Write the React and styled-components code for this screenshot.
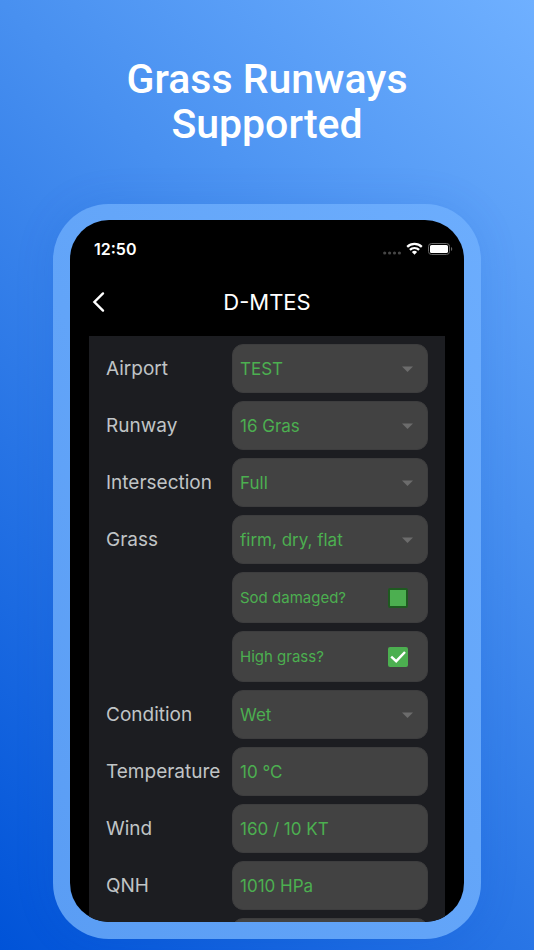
import React from 'react';
import styled, { createGlobalStyle } from 'styled-components';

const GlobalStyle = createGlobalStyle`
  *, *::before, *::after { box-sizing: border-box; }
  body { margin: 0; font-family: Inter, "Noto Sans", sans-serif; }
`;

const Page = styled.main`
  height: 100vh;
  display: flex;
  flex-direction: column;
  align-items: center;
  padding: 57px 53px 11px;
  overflow: hidden;
  background: linear-gradient(45deg, #0053d8 0%, #4890f0 64%, #6fb0ff 100%);
`;

const Headline = styled.h1`
  max-width: 300px;
  margin: 0 0 57px;
  color: #fff;
  font: 500 41px/45px Roboto, sans-serif;
  text-align: center;
`;

const Phone = styled.section`
  flex: 1;
  min-height: 0;
  width: 100%;
  padding: 16px 17px 17px;
  border-radius: 56px;
  background: linear-gradient(to top right, #5a9df4, #6cadfd);
  box-shadow: 0 0 40px rgba(0, 70, 200, 0.12);
`;

const Screen = styled.div`
  height: 100%;
  display: flex;
  flex-direction: column;
  overflow: hidden;
  border-radius: 39px;
  background: #000;
`;

const StatusBar = styled.div`
  display: flex;
  align-items: center;
  justify-content: space-between;
  padding: 19px 11px 0 24px;
  color: #fff;
  font-size: 16px;
  font-weight: 600;
  line-height: 20px;
`;

const StatusIcons = styled.div`
  display: flex;
  align-items: center;
  gap: 5px;
`;

const TitleBar = styled.header`
  display: grid;
  grid-template-columns: 40px 1fr 40px;
  align-items: center;
  padding: 27px 17px 18px;
`;

const BackButton = styled.button`
  display: flex;
  width: 24px;
  height: 32px;
  align-items: center;
  justify-content: center;
  padding: 0;
  border: 0;
  background: none;
`;

const Title = styled.h2`
  margin: 0;
  color: #fff;
  font-size: 22px;
  font-weight: 400;
  line-height: 32px;
  text-align: center;
`;

const Form = styled.form`
  flex: 1;
  min-height: 0;
  display: flex;
  flex-direction: column;
  gap: 8px;
  margin: 0 19px;
  padding: 8px 17px;
  overflow-y: auto;
  scrollbar-width: none;
  background: #1c1d21;
`;

const Row = styled.div`
  flex: none;
  display: grid;
  grid-template-columns: 126px 1fr;
  align-items: center;
`;

const Label = styled.label`
  color: #c0c4c6;
  font-size: 19px;
  line-height: 25px;
`;

const Field = styled.div`
  display: grid;
  grid-column: 2;
  height: 49px;
  align-items: center;
  border: 1px solid #3d3d3e;
  border-radius: 11px;
  background: #424242;

  & > * { grid-area: 1 / 1; }
`;

const controlText = `
  width: 100%;
  height: 100%;
  min-width: 0;
  margin: 0;
  padding: 0 7px;
  border: 0;
  outline: 0;
  appearance: none;
  background: transparent;
  color: #4caf50;
  font: 400 17px/24px Inter, "Noto Sans", sans-serif;
`;

const Select = styled.select`${controlText}`;
const Input = styled.input`${controlText}`;

const Arrow = styled.svg`
  justify-self: end;
  margin-right: 14px;
  pointer-events: none;
`;

const CheckField = styled.label`
  display: flex;
  grid-column: 2;
  height: 51px;
  align-items: center;
  justify-content: space-between;
  padding: 0 19px 0 7px;
  border: 1px solid #3d3d3e;
  border-radius: 11px;
  background: #424242;
  color: #4caf50;
  font-size: 15px;
  line-height: 20px;
`;

const CheckBox = styled.span`
  display: grid;
  width: 20px;
  height: 20px;

  & > * { grid-area: 1 / 1; }
`;

const CheckInput = styled.input`
  width: 20px;
  height: 20px;
  margin: 0;
  appearance: none;
  border: 2px solid #1e5a20;
  border-radius: 2px;
  background: #4caf50;

  &:checked { border-color: #4caf50; }
  & + svg { visibility: hidden; pointer-events: none; }
  &:checked + svg { visibility: visible; }
`;

function SelectRow({ id, label, value }) {
  return (
    <Row>
      <Label htmlFor={id}>{label}</Label>
      <Field>
        <Select id={id} defaultValue={value}>
          <option>{value}</option>
        </Select>
        <Arrow width="11" height="6" viewBox="0 0 11 6" aria-hidden="true">
          <path d="M0 0.5h11L5.500 6z" fill="#6c6c6c" />
        </Arrow>
      </Field>
    </Row>
  );
}

function InputRow({ id, label, value }) {
  return (
    <Row>
      {label && <Label htmlFor={id}>{label}</Label>}
      <Field>
        <Input id={id} defaultValue={value} aria-label={label ? undefined : 'Value'} />
      </Field>
    </Row>
  );
}

function CheckRow({ label, checked }) {
  return (
    <Row>
      <CheckField>
        {label}
        <CheckBox>
          <CheckInput type="checkbox" defaultChecked={checked} />
          <svg width="20" height="20" viewBox="0 0 20 20" aria-hidden="true">
            <path d="M3.200 9.600l5 4.600 8.800-9.200" fill="none" stroke="#fff" strokeWidth="2.400" />
          </svg>
        </CheckBox>
      </CheckField>
    </Row>
  );
}

function SignalIcon() {
  return (
    <svg width="18" height="16" viewBox="0 0 18 16" aria-hidden="true">
      <g fill="#464646">
        <circle cx="1.700" cy="12" r="1.600" />
        <circle cx="6.600" cy="12" r="1.600" />
        <circle cx="11.500" cy="12" r="1.600" />
        <circle cx="16.400" cy="12" r="1.600" />
      </g>
    </svg>
  );
}

function WifiIcon() {
  return (
    <svg width="17" height="14" viewBox="0 0 17 14" aria-hidden="true">
      <g fill="none" stroke="#fff" strokeWidth="2.200">
        <path d="M1.200 4.900a10.400 10.400 0 0 1 14.600 0" />
        <path d="M3.900 7.900a6.500 6.500 0 0 1 9.200 0" />
      </g>
      <path d="M8.500 12.800L5.900 10.100a3.700 3.700 0 0 1 5.200 0z" fill="#fff" />
    </svg>
  );
}

function BatteryIcon() {
  return (
    <svg width="25" height="12" viewBox="0 0 25 12" aria-hidden="true">
      <rect x="0.500" y="0.500" width="21" height="11" rx="3" fill="none" stroke="#666" />
      <rect x="2" y="2" width="18" height="8" rx="1.600" fill="#fff" />
      <path d="M23 4v4c1.700-.7 1.700-3.300 0-4z" fill="#666" />
    </svg>
  );
}

export default function App() {
  return (
    <>
      <GlobalStyle />
      <Page>
        <Headline>Grass Runways Supported</Headline>
        <Phone>
          <Screen>
            <StatusBar>
              <time>12:50</time>
              <StatusIcons>
                <SignalIcon />
                <WifiIcon />
                <BatteryIcon />
              </StatusIcons>
            </StatusBar>
            <TitleBar>
              <BackButton type="button" aria-label="Back">
                <svg width="14" height="22" viewBox="0 0 14 22" aria-hidden="true">
                  <path d="M11 2.400L2.400 11l8.600 8.600" fill="none" stroke="#fff" strokeWidth="2.400" strokeLinecap="round" strokeLinejoin="miter" />
                </svg>
              </BackButton>
              <Title>D-MTES</Title>
            </TitleBar>
            <Form>
              <SelectRow id="airport" label="Airport" value="TEST" />
              <SelectRow id="runway" label="Runway" value="16 Gras" />
              <SelectRow id="intersection" label="Intersection" value="Full" />
              <SelectRow id="grass" label="Grass" value="firm, dry, flat" />
              <CheckRow label="Sod damaged?" />
              <CheckRow label="High grass?" checked />
              <SelectRow id="condition" label="Condition" value="Wet" />
              <InputRow id="temperature" label="Temperature" value="10 °C" />
              <InputRow id="wind" label="Wind" value="160 / 10 KT" />
              <InputRow id="qnh" label="QNH" value="1010 HPa" />
              <InputRow id="next" />
            </Form>
          </Screen>
        </Phone>
      </Page>
    </>
  );
}
